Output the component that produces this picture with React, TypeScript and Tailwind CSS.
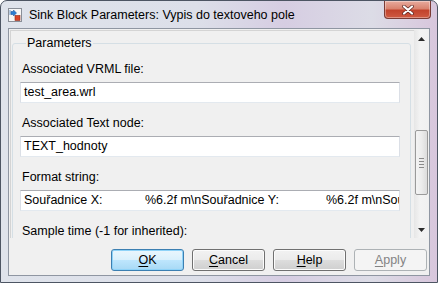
import React from "react";

function AppIcon() {
  return (
    <svg viewBox="0 0 14 14" width="14" height="14">
      <rect x="0.5" y="0.5" width="13" height="13" fill="#f7f7f7" stroke="#8a8f98" />
      <path d="M2 2v5M3 3.5h2.5V2l3 3-3 3V6.5H3z" fill="#2a7fd6" stroke="#1f5ea8" strokeWidth="0.6" />
      <rect x="7" y="7.5" width="5" height="5" fill="#d8452b" stroke="#8f2a18" strokeWidth="0.6" />
    </svg>
  );
}

function CloseButton() {
  return (
    <div className="ml-auto mr-[6px] flex h-[18px] w-[47px] items-center justify-center rounded-b-[4px] border border-t-0 border-[#7a3b35] bg-[linear-gradient(180deg,#e8ab9e_0%,#d9836f_45%,#c2432c_55%,#cf5a42_100%)] shadow-[inset_0_0_0_1px_rgba(255,255,255,0.35)]">
      <svg viewBox="0 0 14 10" width="14" height="10">
        <path d="M3 1.5l8 7M11 1.5l-8 7" stroke="#5a2420" strokeWidth="3.6" strokeLinecap="round" />
        <path d="M3 1.5l8 7M11 1.5l-8 7" stroke="#ffffff" strokeWidth="2.2" strokeLinecap="round" />
      </svg>
    </div>
  );
}

function Field({ children }: { children: React.ReactNode }) {
  return (
    <div className="flex h-[21px] min-w-0 items-center overflow-hidden whitespace-pre border border-[#dbdfe6] border-t-[#abadb3] border-b-[#e3e9ef] bg-white px-[3px]">
      {children}
    </div>
  );
}

function Param({ label, children }: { label: string; children: React.ReactNode }) {
  return (
    <div className="mb-[12px] flex min-w-0 flex-col">
      <div className="mb-[5px] flex h-[16px] items-center pl-[2px]">{label}</div>
      {children}
    </div>
  );
}

function Button({
  label,
  hot,
  primary,
  disabled,
}: {
  label: string;
  hot: number;
  primary?: boolean;
  disabled?: boolean;
}) {
  const base =
    "flex h-[22px] w-[73px] items-center justify-center rounded-[3px] border";
  const look = primary
    ? "border-[#3c7fb1] bg-[linear-gradient(180deg,#eaf6fd_0%,#d9f0fc_50%,#bee6fd_50%,#a7d9f5_100%)] shadow-[inset_0_0_0_1px_#8fd3f8]"
    : disabled
    ? "border-[#adb2b5] bg-[#f4f4f4] text-[#838383]"
    : "border-[#707070] bg-[linear-gradient(180deg,#f2f2f2_0%,#ebebeb_50%,#dddddd_50%,#cfcfcf_100%)] shadow-[inset_0_0_0_1px_#fcfcfc]";
  return (
    <div className={`${base} ${look}`}>
      <span>
        {label.slice(0, hot)}
        <span className="underline underline-offset-2">{label[hot]}</span>
        {label.slice(hot + 1)}
      </span>
    </div>
  );
}

export default function App() {
  return (
    <div className="h-[283px] w-[438px] font-['Liberation_Sans',Arial,sans-serif] text-[12.5px] text-black">
      <div className="flex h-full flex-col rounded-t-[7px] border border-[#4d5563] bg-[linear-gradient(90deg,#dfe3eb_0%,#dcdfe9_45%,#d6cde2_65%,#dcdce6_85%,#d8c6dc_100%)]">
        {/* title bar */}
        <div className="flex h-[27px] items-start">
          <div className="ml-[7px] mt-[7px]">
            <AppIcon />
          </div>
          <span className="ml-[7px] mt-[7px] leading-[14px]">
            Sink Block Parameters: Vypis do textoveho pole
          </span>
          <CloseButton />
        </div>

        {/* client */}
        <div className="mx-[7px] flex flex-1 flex-col border border-[#8f96a2] bg-[#f0f0f0]">
          <div className="ml-[1px] mt-[1px] flex h-[208px]">
            <div className="min-w-0 flex-1 overflow-hidden border-l border-t border-[#d4d4d4] pl-[1px] pr-[3px] pt-[5px]">
              <fieldset className="min-w-0 rounded-[3px] border border-[#d5dfe5] px-[7px] pb-[20px] pr-[10px]">
                <legend className="ml-[6px] px-[1px] leading-[14px]">Parameters</legend>
                <div className="pt-[11px]">
                  <Param label="Associated VRML file:">
                    <Field>test_area.wrl</Field>
                  </Param>
                  <Param label="Associated Text node:">
                    <Field>TEXT_hodnoty</Field>
                  </Param>
                  <Param label="Format string:">
                    <Field>
                      <span className="w-[121px] shrink-0">Souřadnice X:</span>
                      <span className="w-[181px] shrink-0">%6.2f m\nSouřadnice Y:</span>
                      <span className="shrink-0">%6.2f m\nSouřadnice</span>
                    </Field>
                  </Param>
                  <Param label="Sample time (-1 for inherited):">
                    <Field>-1</Field>
                  </Param>
                </div>
              </fieldset>
            </div>

            {/* scrollbar */}
            <div className="flex w-[15px] flex-col bg-[linear-gradient(90deg,#e6e6e6_0%,#f3f3f3_40%,#f0f0f0_100%)]">
              <div className="flex h-[17px] items-center justify-center">
                <svg viewBox="0 0 7 4" width="7" height="4">
                  <path d="M3.5 0L7 4H0z" fill="#2b2b2b" />
                </svg>
              </div>
              <div className="flex flex-1 flex-col">
                <div className="mx-[1px] mt-[83px] flex h-[65px] flex-col items-center justify-center gap-[2px] rounded-[2px] border border-[#9a9a9a] bg-[linear-gradient(90deg,#f4f4f4_0%,#ececec_50%,#dcdcdc_100%)]">
                  <div className="h-px w-[5px] bg-[#8a8a8a]" />
                  <div className="h-px w-[5px] bg-[#8a8a8a]" />
                  <div className="h-px w-[5px] bg-[#8a8a8a]" />
                  <div className="h-px w-[5px] bg-[#8a8a8a]" />
                </div>
              </div>
              <div className="flex h-[17px] items-center justify-center">
                <svg viewBox="0 0 7 4" width="7" height="4">
                  <path d="M0 0h7L3.5 4z" fill="#2b2b2b" />
                </svg>
              </div>
            </div>
          </div>

          {/* buttons */}
          <div className="mt-[11px] flex justify-end gap-[8px] pr-[2px]">
            <Button label="OK" hot={0} primary />
            <Button label="Cancel" hot={0} />
            <Button label="Help" hot={0} />
            <Button label="Apply" hot={0} disabled />
          </div>
        </div>
        <div className="h-[6px]" />
      </div>
    </div>
  );
}
